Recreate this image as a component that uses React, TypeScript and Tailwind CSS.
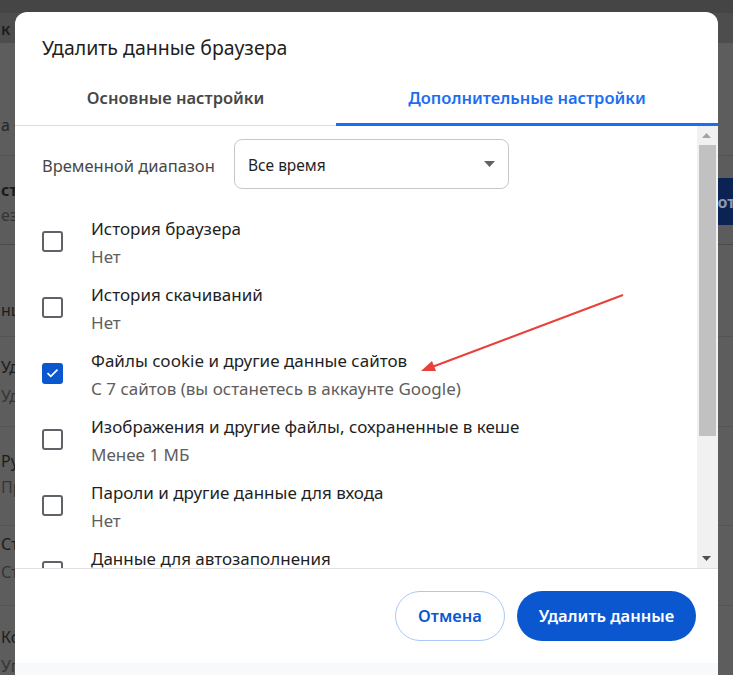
import React from "react";

const items = [
  { title: "История браузера", sub: "Нет", checked: false },
  { title: "История скачиваний", sub: "Нет", checked: false },
  { title: "Файлы cookie и другие данные сайтов", sub: "С 7 сайтов (вы останетесь в аккаунте Google)", checked: true },
  { title: "Изображения и другие файлы, сохраненные в кеше", sub: "Менее 1 МБ", checked: false },
  { title: "Пароли и другие данные для входа", sub: "Нет", checked: false },
  { title: "Данные для автозаполнения", sub: "Нет", checked: false },
];

function Checkbox({ checked }: { checked: boolean }) {
  if (checked) {
    return (
      <div className="w-[21px] h-[21px] rounded-[3px] bg-[#0b57d0] flex items-center justify-center shrink-0">
        <svg width="13" height="10" viewBox="0 0 13 10">
          <polyline points="1.5,5.2 4.8,8.3 11.5,1.7" fill="none" stroke="#fff" strokeWidth="1.8" />
        </svg>
      </div>
    );
  }
  return <div className="w-[21px] h-[21px] rounded-[3px] border-2 border-[#5f6368] shrink-0" />;
}

export default function App() {
  return (
    <div className="relative w-[733px] h-[675px] overflow-hidden bg-[#5e5e5e] font-['Noto_Sans',sans-serif]">
      {/* dimmed page behind */}
      <div className="flex flex-col text-[16px] text-[#1c1c1c] leading-[22px] whitespace-nowrap">
        <div className="h-[13px] bg-[#454545]" />
        <div className="h-[30px] bg-[#4d4d4d] flex items-end pb-[3px] pl-[1px] font-semibold">к п</div>
        <div className="h-[112px] bg-[#5d5d5d] flex items-end pb-[19px] pl-[1px] text-[#262626]">а б</div>
        <div className="h-[1px] bg-[#525252]" />
        <div className="h-[89px] bg-[#5c5c5c] flex justify-between border-b border-[#4a4a4a]">
          <div className="flex flex-col pt-[23px] pl-[1px]">
            <span className="font-bold">ст</span>
            <span className="mt-[3px] text-[#353535]">ез</span>
          </div>
          <div className="mt-[22px] h-[47px] w-[60px] -mr-[20px] rounded-[20px] bg-[#0b2352] flex items-center pl-[14px] text-[#8d97ae] font-bold">
            Вот
          </div>
        </div>
        <div className="h-[92px] bg-[#5d5d5d] flex items-end pb-[15px] pl-[1px] border-b border-[#545454]">нц</div>
        <div className="h-[90px] bg-[#5d5d5d] flex flex-col pt-[19px] pl-[1px] border-b border-[#545454]">
          <span>Удалить</span>
          <span className="mt-[7px] text-[#353535]">Удалить</span>
        </div>
        <div className="h-[99px] bg-[#5d5d5d] flex flex-col pt-[23px] pl-[1px] border-b border-[#545454]">
          <span>Руководство</span>
          <span className="mt-[4px] text-[#353535]">Просмотр</span>
        </div>
        <div className="h-[80px] bg-[#5d5d5d] flex flex-col pt-[7px] pl-[1px] border-b border-[#545454]">
          <span>Сторонние</span>
          <span className="mt-[6px] text-[#353535]">Сторонние</span>
        </div>
        <div className="h-[80px] bg-[#5d5d5d] flex flex-col pt-[20px] pl-[1px]">
          <span>Контроль</span>
          <span className="mt-[7px] text-[#353535]">Управление</span>
        </div>
      </div>

      {/* dialog */}
      <div className="absolute left-[15px] top-[12px] w-[703px] bg-white rounded-t-[12px] flex flex-col overflow-hidden">
        <div className="pt-[24px] px-[27px] text-[19.5px] leading-[24px] text-[#1f1f1f]">Удалить данные браузера</div>
        <div className="flex border-b border-[#dadce0] text-[16.5px] font-semibold leading-[22px]">
          <div className="w-[321px] h-[65px] flex items-end justify-center pb-[16px] text-[#474747]">Основные настройки</div>
          <div className="relative flex-1 h-[65px] flex items-end justify-center pb-[16px] text-[#1b6ef3]">
            Дополнительные настройки
            <div className="absolute left-0 right-0 -bottom-[1px] h-[3px] bg-[#1b6ef3]" />
          </div>
        </div>
        <div className="flex h-[442px]">
          <div className="flex-1 overflow-hidden">
            <div className="flex items-center pt-[13px] pl-[27px]">
              <span className="text-[16.5px] text-[#474747] w-[192px] pt-[4px]">Временной диапазон</span>
              <div className="w-[275px] h-[50px] rounded-[8px] border border-[#c7c7c7] flex items-center justify-between pl-[13px] pr-[13px]">
                <span className="text-[15.5px] text-[#1f1f1f] pt-[3px]">Все время</span>
                <svg width="11" height="6" viewBox="0 0 11 6">
                  <polygon points="0,0 11,0 5.5,6" fill="#5f6368" />
                </svg>
              </div>
            </div>
            <div className="flex flex-col pt-[19px]">
              {items.map((it) => (
                <div key={it.title} className="h-[66px] flex items-center pl-[27px] shrink-0">
                  <Checkbox checked={it.checked} />
                  <div className="ml-[28px] flex flex-col pt-[3px]">
                    <span className="text-[17px] leading-[24px] text-[#1f1f1f]">{it.title}</span>
                    <span className="mt-[4px] text-[17px] leading-[24px] text-[#5e5e5e]">{it.sub}</span>
                  </div>
                </div>
              ))}
            </div>
          </div>
          <div className="w-[21px] bg-[#f1f1f1] flex flex-col items-stretch">
            <div className="h-[19px] flex items-center justify-center pr-[2px]">
              <svg width="9" height="5" viewBox="0 0 9 5">
                <polygon points="0,5 9,5 4.5,0" fill="#a3a3a3" />
              </svg>
            </div>
            <div className="h-[291px] ml-[2px] mr-[2px] bg-[#c1c1c1]" />
            <div className="flex-1" />
            <div className="h-[20px] flex items-center justify-center pr-[2px]">
              <svg width="9" height="5" viewBox="0 0 9 5">
                <polygon points="0,0 9,0 4.5,5" fill="#505050" />
              </svg>
            </div>
          </div>
        </div>
        <div className="border-t border-[#e0e0e0] h-[95px] flex items-start justify-end gap-[12px] pt-[22px] pr-[22px]">
          <button className="h-[50px] w-[110px] rounded-full border border-[#a8c7fa] text-[#0b57d0] text-[16.5px] font-semibold">
            Отмена
          </button>
          <button className="h-[50px] w-[179px] rounded-full bg-[#0b57d0] text-white text-[16.5px] font-semibold">
            Удалить данные
          </button>
        </div>
        <div className="h-[20px] bg-[#f8f9fa]" />
      </div>

      {/* red annotation arrow */}
      <svg className="absolute left-0 top-0" width="733" height="675" viewBox="0 0 733 675">
        <line x1="623" y1="295" x2="432" y2="367" stroke="#e8403a" strokeWidth="2" />
        <polygon points="421,371 436,371 432,361" fill="#e8403a" />
      </svg>
    </div>
  );
}
